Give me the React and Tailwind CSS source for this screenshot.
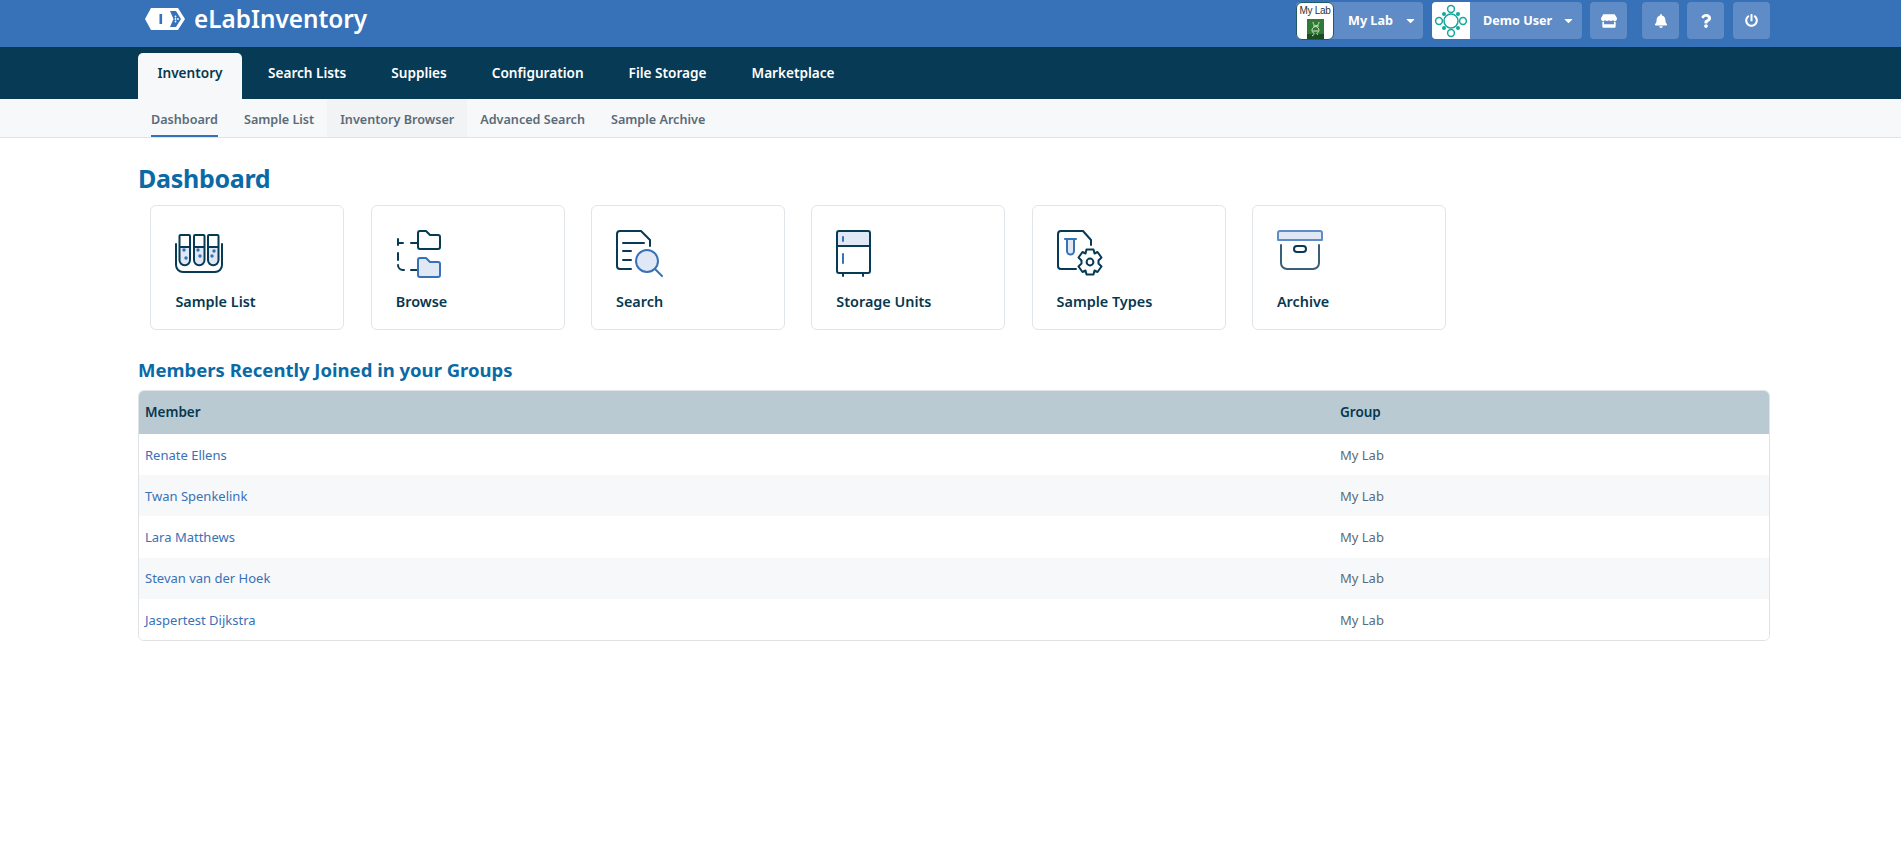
import React from 'react';
import { FaBell, FaCaretDown, FaPowerOff, FaQuestion, FaStore } from 'react-icons/fa';

const NAVY = '#063a55';
const BLUE = '#3771b8';
const PALE = '#e1e8f5';

const tabs = ['Search Lists', 'Supplies', 'Configuration', 'File Storage', 'Marketplace'];
const subTabs = ['Dashboard', 'Sample List', 'Inventory Browser', 'Advanced Search', 'Sample Archive'];
const members = ['Renate Ellens', 'Twan Spenkelink', 'Lara Matthews', 'Stevan van der Hoek', 'Jaspertest Dijkstra'];

const Logo = () => (
  <svg width="40" height="22" viewBox="0 0 40 22" className="shrink-0">
    <path d="M6 0H33L40 11L33 22H6L0 11Z" fill="#fff" />
    <rect x="14.5" y="6" width="2.6" height="10" fill={BLUE} />
    <path d="M25 3H31L36 11L31 19H25L28.5 11Z" fill={BLUE} />
    <g fill="#fff">
      <circle cx="30.5" cy="8.5" r="0.9" />
      <circle cx="33" cy="11" r="0.9" />
      <circle cx="30.5" cy="11" r="0.9" />
      <circle cx="30.5" cy="13.5" r="0.9" />
    </g>
  </svg>
);

const LabAvatar = () => (
  <div className="w-[38px] h-[38px] -my-px shrink-0 bg-white border border-[#1f5a66] rounded-[6px] flex flex-col items-center overflow-hidden">
    <span className="text-[10px] leading-[11px] mt-[2px] text-[#333] font-normal font-['Liberation_Sans',sans-serif] whitespace-nowrap tracking-[-0.3px]">My Lab</span>
    <svg width="17" height="20" viewBox="0 0 17 20" className="mt-[3px]">
      <rect width="17" height="20" fill="#2f7a35" />
      <rect y="15" width="17" height="5" fill="#1c4d22" />
      <path d="M12 3C12 8 5 7 5 11S10 14 5 17M6 3C6 7 12 8 12 11S8 14 11 16M6 7H12M6 12H11" fill="none" stroke="#cfe8c8" strokeWidth="1" />
    </svg>
  </div>
);

const UserAvatar = () => (
  <div className="w-[38px] h-[37px] shrink-0 bg-white rounded-l-[4px] flex items-center justify-center">
    <svg width="34" height="34" viewBox="0 0 34 34" fill="none" stroke="#13a89e" strokeWidth="1.5">
      <circle cx="17" cy="17" r="7" />
      <circle cx="17" cy="5" r="3.4" />
      <circle cx="17" cy="29" r="3.4" />
      <circle cx="5" cy="17" r="3.4" />
      <circle cx="29" cy="17" r="3.4" />
      <g fill="#13a89e" stroke="none">
        <circle cx="10" cy="10" r="2" />
        <circle cx="24" cy="10" r="2" />
        <circle cx="10" cy="24" r="2" />
        <circle cx="24" cy="24" r="2" />
      </g>
    </svg>
  </div>
);

const HeaderIcon = ({ children, className = '' }) => (
  <button className={`w-[37px] h-[37px] rounded-[4px] bg-[#5f8cc6] flex items-center justify-center text-white ${className}`}>
    {children}
  </button>
);

const iconProps = {
  width: 48,
  height: 48,
  viewBox: '0 0 48 48',
  fill: 'none',
  strokeWidth: 2,
  strokeLinecap: 'round',
  strokeLinejoin: 'round',
};

const SampleListIcon = () => (
  <svg {...iconProps}>
    {[4.5, 19, 33].map((x) => (
      <g key={x}>
        <path d={`M${x} 17H${x + 10.5}V30a5.25 5.25 0 0 1-10.5 0Z`} fill={PALE} />
        <path d={`M${x} 6a1 1 0 0 1 1-1h8.5a1 1 0 0 1 1 1V30a5.25 5.25 0 0 1-10.5 0ZM${x} 17H${x + 10.5}`} stroke={NAVY} />
      </g>
    ))}
    <path d="M1 14V35a7 7 0 0 0 7 7H40a7 7 0 0 0 7-7V14" stroke={NAVY} />
    <g fill={BLUE}>
      <circle cx="9" cy="20" r="1.7" />
      <circle cx="11" cy="28" r="1.7" />
      <circle cx="23" cy="20" r="1.7" />
      <circle cx="25" cy="26" r="1.7" />
      <circle cx="39" cy="21" r="1.7" />
      <circle cx="37" cy="26" r="1.7" />
    </g>
  </svg>
);

const BrowseIcon = () => (
  <svg {...iconProps} className="ml-[1.5px]">
    <path d="M1 9V15M1 13H6M14 13H21M1 23V30M1 35a5 5 0 0 0 5 5H7M14 40H21" stroke={NAVY} />
    <path d="M21 3a2 2 0 0 1 2-2h6l4 4h8a2 2 0 0 1 2 2v10a2 2 0 0 1-2 2H23a2 2 0 0 1-2-2Z" stroke={NAVY} />
    <path d="M21 30a2 2 0 0 1 2-2h6l4 4h8a2 2 0 0 1 2 2v11a2 2 0 0 1-2 2H23a2 2 0 0 1-2-2Z" stroke={BLUE} fill={PALE} />
  </svg>
);

const SearchIcon = () => (
  <svg {...iconProps}>
    <path d="M15 39H4a3 3 0 0 1-3-3V4a3 3 0 0 1 3-3H25l9 9V16" stroke={NAVY} />
    <path d="M7 13H28M7 21H15M7 30H15" stroke={NAVY} />
    <circle cx="31" cy="31" r="11" stroke={BLUE} fill={PALE} />
    <path d="M39 39L46 46" stroke={BLUE} />
  </svg>
);

const StorageIcon = () => (
  <svg {...iconProps}>
    <path d="M1 16V3a2 2 0 0 1 2-2H32a2 2 0 0 1 2 2V16Z" fill={PALE} />
    <rect x="1" y="1" width="33" height="42" rx="2" stroke={NAVY} />
    <path d="M1 16H34M7 43V46M27 43V46" stroke={NAVY} />
    <path d="M7 7V11M7 24V33" stroke={BLUE} />
  </svg>
);

const TypesIcon = () => (
  <svg {...iconProps}>
    <path d="M19 39H4a3 3 0 0 1-3-3V4a3 3 0 0 1 3-3H26l8 9V15" stroke={NAVY} />
    <path d="M10 9V21a3.5 3.5 0 0 0 7 0V9Z" fill={PALE} />
    <path d="M8 9H19M10 9V21a3.5 3.5 0 0 0 7 0V9" stroke={BLUE} />
    <g stroke={NAVY}>
      <circle cx="33" cy="32" r="3.4" />
      <path d="M29.5 19.5h7l1 4 3-1.5 4 5.5-3 3v3l3 3-4 5.5-3-1.5-1 4h-7l-1-4-3 1.5-4-5.5 3-3v-3l-3-3 4-5.5 3 1.5Z" />
    </g>
  </svg>
);

const ArchiveIcon = () => (
  <svg {...iconProps}>
    <path d="M1 10V3a2 2 0 0 1 2-2H43a2 2 0 0 1 2 2V10Z" fill={PALE} stroke="#5f8cc6" />
    <path d="M4 15V33a6 6 0 0 0 6 6H36a6 6 0 0 0 6-6V15" stroke="#3a6079" />
    <rect x="17" y="16" width="12" height="6" rx="3" stroke={NAVY} />
  </svg>
);

const cards = [
  ['Sample List', SampleListIcon],
  ['Browse', BrowseIcon],
  ['Search', SearchIcon],
  ['Storage Units', StorageIcon],
  ['Sample Types', TypesIcon],
  ['Archive', ArchiveIcon],
];

const App = () => (
  <div className="min-h-[866px] bg-white font-['Noto_Sans',sans-serif] text-[#06384f]">
    <header className="h-[47px] bg-[#3771b8] pl-[145px] pr-[131px] flex items-start justify-between">
      <div className="flex items-center gap-[9px] h-[38px]">
        <Logo />
        <span className="text-[24.3px] leading-none font-semibold text-white">eLabInventory</span>
      </div>
      <div className="flex items-center mt-[2px]">
        <div className="flex items-center h-[37px] w-[127px] rounded-[4px] bg-[#5f8cc6] text-white text-[12.6px] font-bold">
          <LabAvatar />
          <span className="ml-[14px] pt-[1px]">My Lab</span>
          <FaCaretDown className="ml-auto mr-[6px] text-[13px]" />
        </div>
        <div className="flex items-center h-[37px] w-[150px] ml-[9px] rounded-[4px] bg-[#5f8cc6] text-white text-[12.6px] font-bold">
          <UserAvatar />
          <span className="ml-[13px] pt-[1px]">Demo User</span>
          <FaCaretDown className="ml-auto mr-[7px] text-[13px]" />
        </div>
        <HeaderIcon className="ml-[8px]"><FaStore className="text-[16px]" /></HeaderIcon>
        <HeaderIcon className="ml-[15px]"><FaBell className="text-[14px]" /></HeaderIcon>
        <HeaderIcon className="ml-[8px]"><FaQuestion className="text-[14px]" /></HeaderIcon>
        <HeaderIcon className="ml-[9px]"><FaPowerOff className="text-[13px]" /></HeaderIcon>
      </div>
    </header>

    <nav className="h-[52px] bg-[#063a55] pl-[138px] flex items-end gap-[7px] text-[13.6px] font-semibold">
      <div className="h-[46px] w-[104px] pb-[6px] flex items-center justify-center bg-[#f7f8fa] rounded-t-[5px] text-[#06384f]">Inventory</div>
      {tabs.map((tab) => (
        <div key={tab} className="h-[46px] pb-[6px] px-[19px] flex items-center text-white">{tab}</div>
      ))}
    </nav>

    <div className="h-[39px] bg-[#f7f8fa] border-b border-[#dfe3e6] pl-[138px] flex text-[12.6px] font-semibold text-[#5a6b78]">
      {subTabs.map((tab) => (
        <div key={tab} className={`h-full px-[13px] ${tab === 'Inventory Browser' ? 'bg-[#f2f3f5]' : ''}`}>
          <div className={`h-full pt-[6px] flex items-center border-b-2 ${tab === 'Dashboard' ? 'border-[#3771b8]' : 'border-transparent'}`}>{tab}</div>
        </div>
      ))}
    </div>

    <main className="pl-[138px] pr-[131px]">
      <h1 className="mt-[21px] text-[25px] leading-[38px] font-bold tracking-[-0.3px] text-[#0a6aa6]">Dashboard</h1>
      <div className="mt-[8px] ml-[12.4px] flex gap-[26.3px]">
        {cards.map(([label, Icon]) => (
          <div key={label} className="w-[194px] h-[125px] border border-[#dfe5e8] rounded-[6px] pl-[24px] pt-[24px]">
            <Icon />
            <div className="mt-[14px] text-[14.4px] leading-[20px] font-semibold">{label}</div>
          </div>
        ))}
      </div>
      <h2 className="mt-[26px] text-[18.5px] leading-[28px] font-bold text-[#0a6aa6]">Members Recently Joined in your Groups</h2>
      <div className="mt-[6px] border border-[#dfe3e6] rounded-[6px] overflow-hidden">
        <table className="w-full table-fixed text-[13px]">
          <thead>
            <tr className="h-[43px] bg-[#b9cad3] text-left text-[13.5px]">
              <th className="w-[1195px] pl-[6px] font-semibold">Member</th>
              <th className="pl-[6px] font-semibold">Group</th>
            </tr>
          </thead>
          <tbody>
            {members.map((name, i) => (
              <tr key={name} className={`h-[41.2px] ${i % 2 === 1 ? 'bg-[#f7f8fa]' : 'bg-white'}`}>
                <td className="pl-[6px] pt-[2px] text-[#3771b8]">{name}</td>
                <td className="pl-[6px] pt-[2px] text-[#5a6b78]">My Lab</td>
              </tr>
            ))}
          </tbody>
        </table>
      </div>
    </main>
  </div>
);

export default App;
